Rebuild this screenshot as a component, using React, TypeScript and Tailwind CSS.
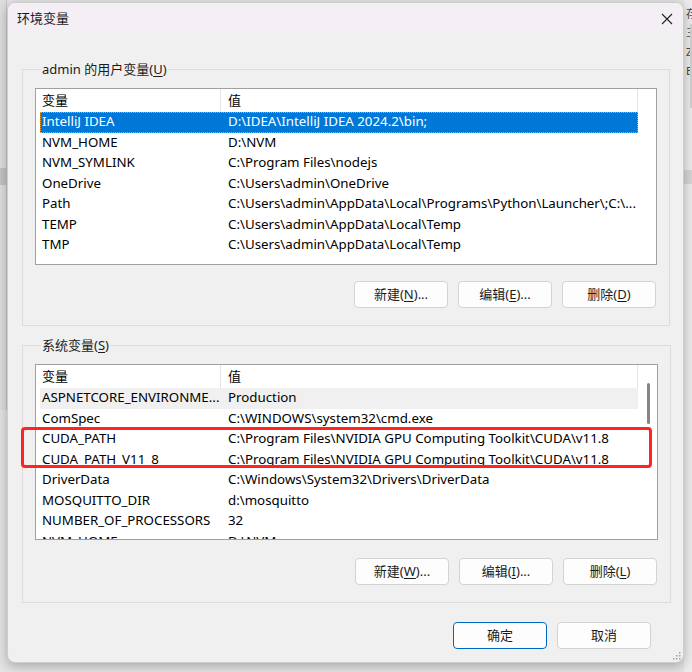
import React from "react";

const userVars = [
  ["IntelliJ IDEA", "D:\\IDEA\\IntelliJ IDEA 2024.2\\bin;"],
  ["NVM_HOME", "D:\\NVM"],
  ["NVM_SYMLINK", "C:\\Program Files\\nodejs"],
  ["OneDrive", "C:\\Users\\admin\\OneDrive"],
  ["Path", "C:\\Users\\admin\\AppData\\Local\\Programs\\Python\\Launcher\\;C:\\..."],
  ["TEMP", "C:\\Users\\admin\\AppData\\Local\\Temp"],
  ["TMP", "C:\\Users\\admin\\AppData\\Local\\Temp"],
];

const sysVars = [
  ["ASPNETCORE_ENVIRONME...", "Production"],
  ["ComSpec", "C:\\WINDOWS\\system32\\cmd.exe"],
  ["CUDA_PATH", "C:\\Program Files\\NVIDIA GPU Computing Toolkit\\CUDA\\v11.8"],
  ["CUDA_PATH_V11_8", "C:\\Program Files\\NVIDIA GPU Computing Toolkit\\CUDA\\v11.8"],
  ["DriverData", "C:\\Windows\\System32\\Drivers\\DriverData"],
  ["MOSQUITTO_DIR", "d:\\mosquitto"],
  ["NUMBER_OF_PROCESSORS", "32"],
  ["NVM_HOME", "D:\\NVM"],
];

const Key = ({ k }: { k: string }) => (
  <>
    (<span className="underline underline-offset-2">{k}</span>)
  </>
);

const Btn = ({ label, k, dots = true, primary = false }: { label: string; k?: string; dots?: boolean; primary?: boolean }) => (
  <button
    className={`w-[94px] h-[27px] rounded-[4px] bg-[#fdfdfd] text-[13px] text-[#1b1b1b] flex items-center justify-center ${
      primary ? "border border-[#0067c0]" : "border border-[#d3d3d3]"
    }`}
  >
    {label}
    {k && <Key k={k} />}
    {k && dots && "..."}
  </button>
);

const VarList = ({
  rows,
  selected,
  focused,
  scroll,
  height,
}: {
  rows: string[][];
  selected: number;
  focused: boolean;
  scroll?: boolean;
  height: string;
}) => (
  <div className={`${height} border border-[#a0a0a0] bg-white overflow-hidden flex pl-[4px]`}>
    <div className="w-[598px] flex flex-col">
      {/* Header */}
      <div className="h-[23px] flex shrink-0 text-[13px]">
        <div className="w-[181px] border-r border-[#e5e5e5] pl-[2px] flex items-center">变量</div>
        <div className="flex-1 border-r border-[#e5e5e5] pl-[7px] flex items-center">值</div>
      </div>
      {rows.map(([name, value], i) => {
        const sel = i === selected;
        const cls = sel
          ? focused
            ? "bg-[#0078d7] text-white outline outline-1 outline-dotted outline-[#f0a030] -outline-offset-1"
            : "bg-[#f0f0f0] text-black"
          : "text-black";
        return (
          <div key={name} className={`h-[20.5px] shrink-0 flex items-center text-[13.3px] ${cls}`}>
            <div className="w-[181px] pl-[2px] whitespace-nowrap overflow-hidden">{name}</div>
            <div className="flex-1 pl-[7px] whitespace-nowrap overflow-hidden">{value}</div>
          </div>
        );
      })}
    </div>
    {scroll && (
      <div className="w-[19px] flex justify-center pt-[18px] pl-[1px]">
        <div className="w-[3px] h-[41px] rounded-full bg-[#858585]" />
      </div>
    )}
  </div>
);

const Group = ({ title, k, children }: { title: string; k: string; children: React.ReactNode }) => (
  <fieldset className="border border-[#dcdcdc] px-[12px] w-[648px]">
    <legend className="ml-[6px] px-[1px] text-[13px] text-[#1b1b1b] leading-[18px]">
      {title}
      <Key k={k} />
    </legend>
    {children}
  </fieldset>
);

export default function App() {
  return (
    <div
      className="w-[692px] h-[672px] bg-[#e4e4e4] relative overflow-hidden"
      style={{ fontFamily: '"Noto Sans", "Noto Sans CJK SC", sans-serif' }}
    >
      {/* windows behind */}
      <div className="absolute left-0 top-0 w-[7px] h-[410px] bg-[#dedede] border-r border-[#c8c8c8]" />
      <div className="absolute left-0 top-[168px] w-[7px] h-[17px] bg-[#c4c4c4]" />
      <div className="absolute left-[684px] top-0 w-[8px] h-[672px] bg-[#ececec]" />
      <div className="absolute left-[686px] top-[4px] w-[6px] overflow-hidden text-[11px] leading-[19px] text-[#444] flex flex-col">
        <span>存</span>
        <span>三</span>
        <span>Z</span>
        <span>E</span>
      </div>
      <div className="absolute left-[690px] top-[24px] w-[2px] h-[84px] bg-[#d0d0d0]" />
      <div className="absolute left-[684px] top-[170px] w-[8px] h-[14px] bg-[#d6d6d6]" />

      <div className="pl-[7px] pt-[2px]">
        <div className="relative w-[677px] h-[661px] bg-[#f0f0f0] rounded-[8px] border border-[#cdcdcd] shadow-[0_3px_12px_rgba(0,0,0,0.28)] flex flex-col overflow-hidden">
          {/* Title bar */}
          <div className="h-[31px] bg-[#f4eff5] flex items-center justify-between pl-[9px] pr-[10px] shrink-0">
            <span className="text-[13px] text-[#1b1b1b]">环境变量</span>
            <svg width="12" height="12" viewBox="0 0 12 12" className="mt-[1px]">
              <path d="M1 1L11 11M11 1L1 11" stroke="#222" strokeWidth="1.1" />
            </svg>
          </div>

          <div className="pl-[14px] pt-[26px] flex flex-col">
            <Group title="admin 的用户变量" k="U">
              <div className="pt-[10px]">
                <VarList rows={userVars} selected={0} focused height="h-[177px]" />
              </div>
              <div className="flex justify-end gap-[10px] pt-[16px] pb-[17px] pr-[1px]">
                <Btn label="新建" k="N" />
                <Btn label="编辑" k="E" />
                <Btn label="删除" k="D" dots={false} />
              </div>
            </Group>

            <div className="h-[10px]" />

            <Group title="系统变量" k="S">
              <div className="pt-[10px]">
                <VarList rows={sysVars} selected={0} focused={false} scroll height="h-[176px]" />
              </div>
              <div className="flex justify-end gap-[10px] pt-[18px] pb-[17px] pr-[1px]">
                <Btn label="新建" k="W" />
                <Btn label="编辑" k="I" />
                <Btn label="删除" k="L" dots={false} />
              </div>
            </Group>

            <div className="flex justify-end gap-[10px] pt-[19px] pr-[32px]">
              <Btn label="确定" primary />
              <Btn label="取消" />
            </div>
          </div>

          {/* highlight */}
          <div className="absolute left-[13px] top-[424px] w-[631px] h-[41px] border-[3px] border-[#ff2424] rounded-[4px]" />

          {/* resize grip */}
          <svg width="9" height="9" viewBox="0 0 9 9" className="absolute right-[2px] bottom-[2px]">
            {[
              [7, 1],
              [4, 4],
              [7, 4],
              [1, 7],
              [4, 7],
              [7, 7],
            ].map(([x, y]) => (
              <rect key={`${x}-${y}`} x={x} y={y} width="1.5" height="1.5" fill="#a0a0a0" />
            ))}
          </svg>
        </div>
      </div>
    </div>
  );
}
